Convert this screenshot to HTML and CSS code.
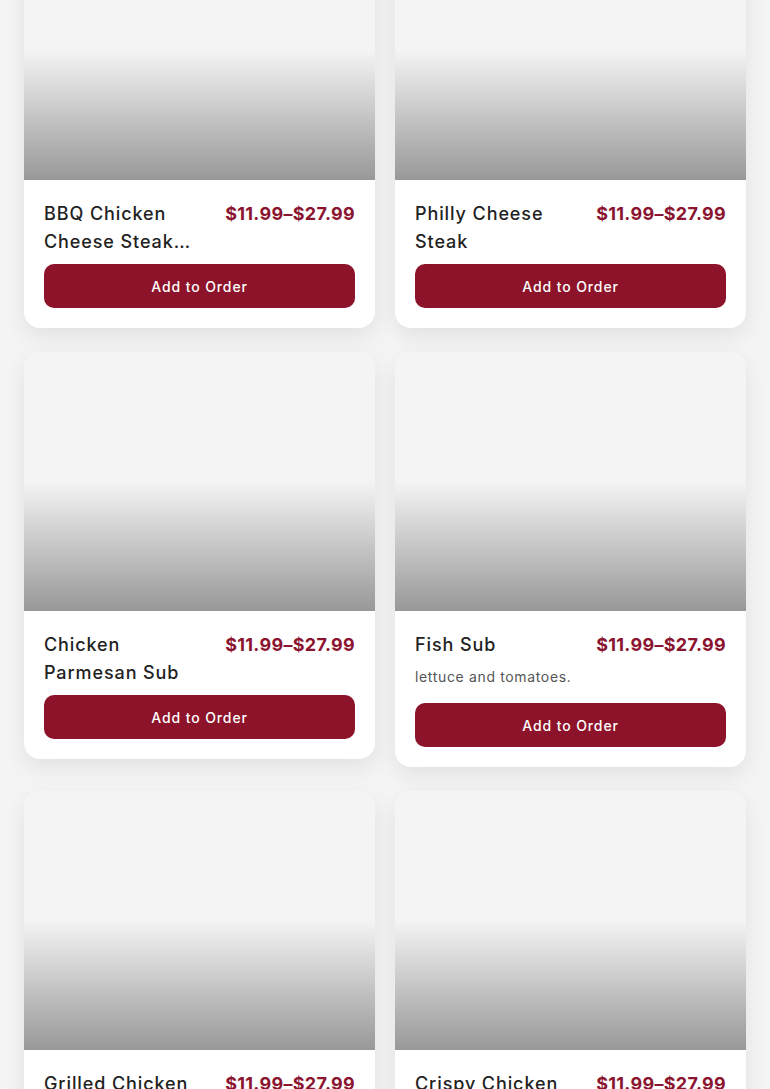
FILE: index.html
```html
<!DOCTYPE html>
<html lang="en">
<head>
  <meta charset="UTF-8">
  <title>Menu</title>
  <link rel="stylesheet" href="styles.css">
</head>
<body>

  <div class="menu-grid">

    <div class="card">
      <div class="card-img"></div>
      <div class="card-body">
        <div class="card-head">
          <h3 class="card-title">BBQ Chicken Cheese Steak Sub</h3>
          <span class="card-price">$11.99–$27.99</span>
        </div>
        <button class="add-btn">Add to Order</button>
      </div>
    </div>

    <div class="card">
      <div class="card-img"></div>
      <div class="card-body">
        <div class="card-head">
          <h3 class="card-title">Philly Cheese Steak</h3>
          <span class="card-price">$11.99–$27.99</span>
        </div>
        <button class="add-btn">Add to Order</button>
      </div>
    </div>

    <div class="card">
      <div class="card-img"></div>
      <div class="card-body">
        <div class="card-head">
          <h3 class="card-title">Chicken Parmesan Sub</h3>
          <span class="card-price">$11.99–$27.99</span>
        </div>
        <button class="add-btn">Add to Order</button>
      </div>
    </div>

    <div class="card">
      <div class="card-img"></div>
      <div class="card-body">
        <div class="card-head">
          <h3 class="card-title">Fish Sub</h3>
          <span class="card-price">$11.99–$27.99</span>
        </div>
        <p class="card-desc">lettuce and tomatoes.</p>
        <button class="add-btn">Add to Order</button>
      </div>
    </div>

    <div class="card">
      <div class="card-img"></div>
      <div class="card-body">
        <div class="card-head">
          <h3 class="card-title">Grilled Chicken Sub</h3>
          <span class="card-price">$11.99–$27.99</span>
        </div>
        <button class="add-btn">Add to Order</button>
      </div>
    </div>

    <div class="card">
      <div class="card-img"></div>
      <div class="card-body">
        <div class="card-head">
          <h3 class="card-title">Crispy Chicken Sub</h3>
          <span class="card-price">$11.99–$27.99</span>
        </div>
        <button class="add-btn">Add to Order</button>
      </div>
    </div>

  </div>

</body>
</html>
```

FILE: styles.css
```css
* {
  box-sizing: border-box;
}

body {
  margin: 0;
  font-family: Inter, 'Noto Sans', sans-serif;
  background: #f4f4f4;
  color: #222;
}

/* page is shown scrolled a bit into the grid */
.menu-grid {
  display: grid;
  grid-template-columns: 1fr 1fr;
  gap: 24px 20px;
  padding: 0 24px 24px;
  margin-top: -79px;
  align-items: start;
}

.card {
  background: white;
  border-radius: 16px;
  overflow: hidden;
  box-shadow: 0 8px 22px rgba(0, 0, 0, 0.08);
}

.card-img {
  height: 259px;
  background: linear-gradient(to bottom, #f4f4f4 50%, #989898 100%);
}

.card-body {
  padding: 20px;
}

.card-head {
  display: flex;
  justify-content: space-between;
  align-items: flex-start;
  gap: 16px;
}

.card-title {
  margin: 0;
  font-size: 18px;
  line-height: 28px;
  font-weight: 500;
  letter-spacing: 0.9px;
  color: #222;
  display: -webkit-box;
  -webkit-line-clamp: 2;
  -webkit-box-orient: vertical;
  overflow: hidden;
}

.card-price {
  flex-shrink: 0;
  font-size: 18px;
  line-height: 28px;
  font-weight: 700;
  letter-spacing: 0.3px;
  color: #8b1530;
}

.card-desc {
  margin: 8px 0 16px;
  font-size: 14px;
  line-height: 20px;
  color: #555;
  letter-spacing: 0.65px;
}

.add-btn {
  display: block;
  width: 100%;
  height: 44px;
  margin-top: 8px;
  border: none;
  border-radius: 10px;
  background: #8c1329;
  color: white;
  font-family: inherit;
  font-size: 14px;
  font-weight: 500;
  letter-spacing: 0.9px;
  cursor: pointer;
}
```
